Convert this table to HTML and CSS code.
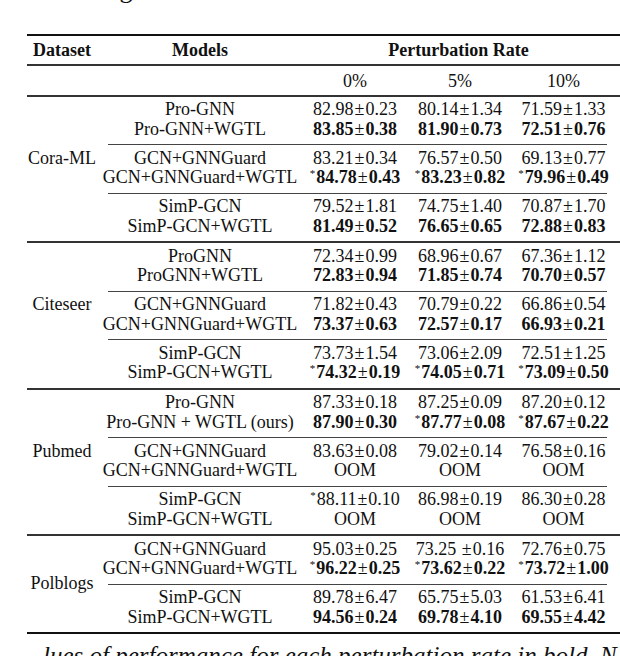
FILE: index.html
```html
<!DOCTYPE html>
<html>
<head>
<meta charset="utf-8">
<link rel="stylesheet" href="styles.css">
</head>
<body>
<p class="above">the setting</p>
<table class="results">
  <colgroup>
    <col class="c-ds"><col class="c-model"><col class="c-n1"><col class="c-n2"><col class="c-n3">
  </colgroup>
  <thead>
    <tr class="h1"><th>Dataset</th><th>Models</th><th colspan="3">Perturbation Rate</th></tr>
    <tr class="h2"><th></th><th></th><th>0%</th><th>5%</th><th>10%</th></tr>
  </thead>
  <tbody>
    <tr class="g1"><td class="ds" rowspan="8">Cora-ML</td><td>Pro-GNN</td><td>82.98<span class="pm">±</span>0.23</td><td>80.14<span class="pm">±</span>1.34</td><td>71.59<span class="pm">±</span>1.33</td></tr>
    <tr class="g2"><td>Pro-GNN+WGTL</td><td><b>83.85<span class="pm">±</span>0.38</b></td><td><b>81.90<span class="pm">±</span>0.73</b></td><td><b>72.51<span class="pm">±</span>0.76</b></td></tr>
    <tr class="cmid"><td colspan="4"><div class="cline"></div></td></tr>
    <tr class="g1"><td>GCN+GNNGuard</td><td>83.21<span class="pm">±</span>0.34</td><td>76.57<span class="pm">±</span>0.50</td><td>69.13<span class="pm">±</span>0.77</td></tr>
    <tr class="g2"><td>GCN+GNNGuard+WGTL</td><td><sup class="st">*</sup><b>84.78<span class="pm">±</span>0.43</b></td><td><sup class="st">*</sup><b>83.23<span class="pm">±</span>0.82</b></td><td><sup class="st">*</sup><b>79.96<span class="pm">±</span>0.49</b></td></tr>
    <tr class="cmid"><td colspan="4"><div class="cline"></div></td></tr>
    <tr class="g1"><td>SimP-GCN</td><td>79.52<span class="pm">±</span>1.81</td><td>74.75<span class="pm">±</span>1.40</td><td>70.87<span class="pm">±</span>1.70</td></tr>
    <tr class="g2"><td>SimP-GCN+WGTL</td><td><b>81.49<span class="pm">±</span>0.52</b></td><td><b>76.65<span class="pm">±</span>0.65</b></td><td><b>72.88<span class="pm">±</span>0.83</b></td></tr>
  </tbody>
  <tbody>
    <tr class="g1"><td class="ds" rowspan="8">Citeseer</td><td>ProGNN</td><td>72.34<span class="pm">±</span>0.99</td><td>68.96<span class="pm">±</span>0.67</td><td>67.36<span class="pm">±</span>1.12</td></tr>
    <tr class="g2"><td>ProGNN+WGTL</td><td><b>72.83<span class="pm">±</span>0.94</b></td><td><b>71.85<span class="pm">±</span>0.74</b></td><td><b>70.70<span class="pm">±</span>0.57</b></td></tr>
    <tr class="cmid"><td colspan="4"><div class="cline"></div></td></tr>
    <tr class="g1"><td>GCN+GNNGuard</td><td>71.82<span class="pm">±</span>0.43</td><td>70.79<span class="pm">±</span>0.22</td><td>66.86<span class="pm">±</span>0.54</td></tr>
    <tr class="g2"><td>GCN+GNNGuard+WGTL</td><td><b>73.37<span class="pm">±</span>0.63</b></td><td><b>72.57<span class="pm">±</span>0.17</b></td><td><b>66.93<span class="pm">±</span>0.21</b></td></tr>
    <tr class="cmid"><td colspan="4"><div class="cline"></div></td></tr>
    <tr class="g1"><td>SimP-GCN</td><td>73.73<span class="pm">±</span>1.54</td><td>73.06<span class="pm">±</span>2.09</td><td>72.51<span class="pm">±</span>1.25</td></tr>
    <tr class="g2"><td>SimP-GCN+WGTL</td><td><sup class="st">*</sup><b>74.32<span class="pm">±</span>0.19</b></td><td><sup class="st">*</sup><b>74.05<span class="pm">±</span>0.71</b></td><td><sup class="st">*</sup><b>73.09<span class="pm">±</span>0.50</b></td></tr>
  </tbody>
  <tbody>
    <tr class="g1"><td class="ds" rowspan="8">Pubmed</td><td>Pro-GNN</td><td>87.33<span class="pm">±</span>0.18</td><td>87.25<span class="pm">±</span>0.09</td><td>87.20<span class="pm">±</span>0.12</td></tr>
    <tr class="g2"><td>Pro-GNN + WGTL (ours)</td><td><b>87.90<span class="pm">±</span>0.30</b></td><td><sup class="st">*</sup><b>87.77<span class="pm">±</span>0.08</b></td><td><sup class="st">*</sup><b>87.67<span class="pm">±</span>0.22</b></td></tr>
    <tr class="cmid"><td colspan="4"><div class="cline"></div></td></tr>
    <tr class="g1"><td>GCN+GNNGuard</td><td>83.63<span class="pm">±</span>0.08</td><td>79.02<span class="pm">±</span>0.14</td><td>76.58<span class="pm">±</span>0.16</td></tr>
    <tr class="g2"><td>GCN+GNNGuard+WGTL</td><td>OOM</td><td>OOM</td><td>OOM</td></tr>
    <tr class="cmid"><td colspan="4"><div class="cline"></div></td></tr>
    <tr class="g1"><td>SimP-GCN</td><td><sup class="st">*</sup>88.11<span class="pm">±</span>0.10</td><td>86.98<span class="pm">±</span>0.19</td><td>86.30<span class="pm">±</span>0.28</td></tr>
    <tr class="g2"><td>SimP-GCN+WGTL</td><td>OOM</td><td>OOM</td><td>OOM</td></tr>
  </tbody>
  <tbody>
    <tr class="g1"><td class="ds mid" rowspan="5">Polblogs</td><td>GCN+GNNGuard</td><td>95.03<span class="pm">±</span>0.25</td><td>73.25 <span class="pm">±</span>0.16</td><td>72.76<span class="pm">±</span>0.75</td></tr>
    <tr class="g2"><td>GCN+GNNGuard+WGTL</td><td><sup class="st">*</sup><b>96.22<span class="pm">±</span>0.25</b></td><td><sup class="st">*</sup><b>73.62<span class="pm">±</span>0.22</b></td><td><sup class="st">*</sup><b>73.72<span class="pm">±</span>1.00</b></td></tr>
    <tr class="cmid"><td colspan="4"><div class="cline"></div></td></tr>
    <tr class="g1"><td>SimP-GCN</td><td>89.78<span class="pm">±</span>6.47</td><td>65.75<span class="pm">±</span>5.03</td><td>61.53<span class="pm">±</span>6.41</td></tr>
    <tr class="g2"><td>SimP-GCN+WGTL</td><td><b>94.56<span class="pm">±</span>0.24</b></td><td><b>69.78<span class="pm">±</span>4.10</b></td><td><b>69.55<span class="pm">±</span>4.42</b></td></tr>
  </tbody>
</table>
<p class="caption">lues of performance for each perturbation rate in bold. N</p>
</body>
</html>
```

FILE: styles.css
```css
html, body {
  margin: 0;
  padding: 0;
  background: #fff;
}

body {
  width: 620px;
  height: 656px;
  overflow: hidden;
  font-family: "Liberation Serif", "Times New Roman", serif;
  color: #111;
}

.above {
  margin: -23px 0 0;
  height: 57px;
  padding-left: 25px;
  font-size: 26px;
  line-height: 26px;
  white-space: nowrap;
}

.results {
  margin-left: 27px;
  width: 593px;
  table-layout: fixed;
  border-collapse: collapse;
  font-size: 18px;
  line-height: 19.5px;
  border-top: 2px solid #111;
  border-bottom: 2px solid #111;
}

.c-ds { width: 70px; }
.c-model { width: 206px; }
.c-n1 { width: 104px; }
.c-n2 { width: 106px; }
.c-n3 { width: 107px; }

.results th,
.results td {
  padding: 0;
  text-align: center;
  font-weight: normal;
  white-space: nowrap;
}

.results th:last-child,
.results td:last-child {
  padding-right: 6px;
}

.h1 th {
  font-weight: bold;
  padding-top: 5px;
  padding-bottom: 3px;
}

.h2 th {
  border-top: 2px solid #333;
  padding-top: 6px;
  padding-bottom: 3.5px;
}

.results tbody {
  border-top: 2px solid #333;
}

.results .g1 td {
  padding-top: 3.5px;
}

.results .g2 td {
  padding-bottom: 5px;
}

.results td.ds {
  vertical-align: top;
  padding: 52px 0 0;
}

.results td.ds.mid {
  vertical-align: middle;
  padding: 0;
}

.results .cmid td {
  padding: 0;
  line-height: 0;
  font-size: 0;
}

.cline {
  height: 1px;
  background: #444;
  margin: 0 13px 0 11px;
}

.pm {
  font-weight: normal;
  margin: 0 1px;
}

.st {
  font-size: 11px;
  line-height: 0;
  vertical-align: 6px;
  margin-right: 1px;
  font-weight: normal;
}

.caption {
  margin: 8px 0 0;
  padding-left: 43px;
  font-size: 25px;
  font-style: italic;
  white-space: nowrap;
}
```
